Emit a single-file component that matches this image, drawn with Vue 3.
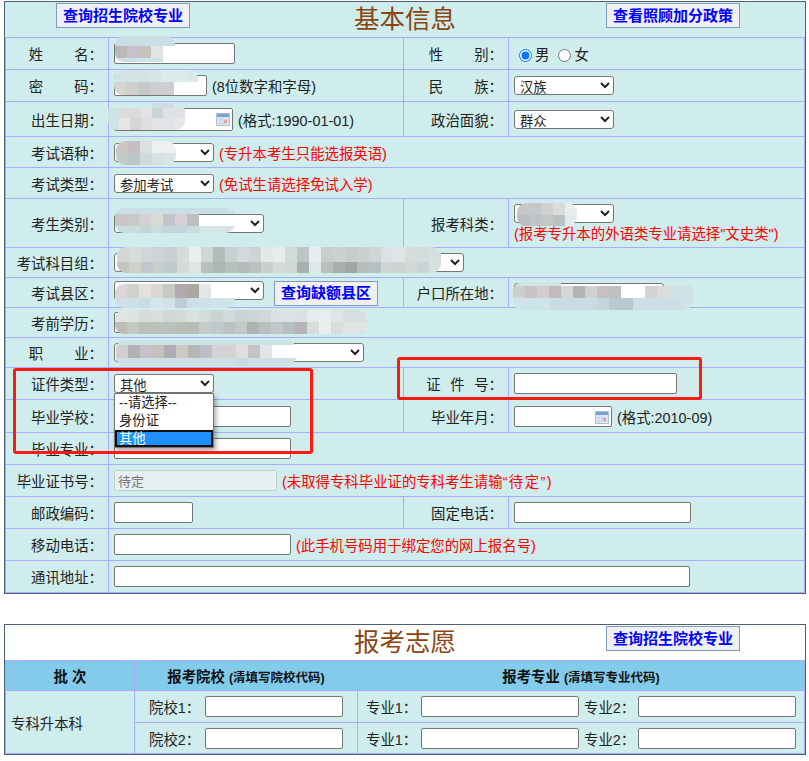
<script setup>
const patches = [
  { x: 115, y: 36, cell: 12, rh: [10, 12, 4], rows: ['c9dfe5 c9dfe5 c9dfe5 cadfe5 c9dfe5', 'bcb8b4 c8c0cc c6c2be e2e3e3 -', 'cbe0e6 cbe0e6 cfe4e8 cfe4e8 -'] },
  { x: 114, y: 70, cell: 12, rh: [12, 13], rows: ['cfe4e6 d4e2e3 d4e2e3 d6e5e6 dcebec dcebec d9e9ea', 'd7d5d3 d2cecb c4c9c8 cccfcf cdd0d0 - -'] },
  { x: 108, y: 103, cell: 11, rh: [5, 10, 12], rows: ['- - - - cbdde2 cbdde2 -', 'cde3e6 d9dcdc dddcdc e2e3e4 c9d3d8 dfe2e4 dfe2e4', 'cde3e6 e5e5e5 d7d5d3 dfdfe0 e3e4e8 e3e3e6 e6e7ea'] },
  { x: 116, y: 141, cell: 12, rh: [12, 12], rows: ['cbc5c3 c5bfc1 dde0e0 eeefef eff0f0', 'c0cbca b9c7c6 cddad9 d4e2e1 d7e5e4'] },
  { x: 115, y: 208, cell: 12, rh: [6, 12, 7], rows: ['c8e0e3 c8e0e3 c8e0e3 c8e0e3 c8e0e3 c8e0e3 c8e0e3 c8e0e3 c8e0e3 c8e0e3', 'ccc5c5 c8c9c9 d6cfd3 d8dbd5 c5c3ca d6d0d4 bcc0c2 - - -', 'c9dcdf c9dcdf c4d6dc c9dcdf c4d6dc c4d6dc c9dcdf d5e5e7 d5e5e7 d5e5e7'] },
  { x: 517, y: 203, cell: 12, rh: [12, 11], rows: ['c7c7c8 c5c7ca d0d0cf d9dcdc e8eeee', 'b6c0c4 bcc4c6 c4c8c4 bac3c4 e2eaea'] },
  { x: 117, y: 247, cell: 12, rh: [15, 11], rows: [
    'd2d8d7 d8dcda d1d6d6 cfd3d5 c8d0d1 d7dcd9 e8eded d0d6d4 b4bcbb c8d0d0 d4d9dc ced4d5 e4e8e7 e6ebeb d3dbd9 bec4c6 e7ecec c8cece ccd1d0 c6cbcd ced0cd d0d6d6 dde1e3 dfe4e4 d6dcdc d4dbdb d6dede',
    'c3c5c0 ccd1cc c6c4cc c8cecc c0cbcb d6dad4 e0e5e2 b8c0be aeb5b3 b8bfbf b2bbb7 bcc0c0 c8cfcc d6dbda d0d7d4 a8afaf dfe7e8 b8bfbc a8aeac a0a7a3 b6bdbb b7c0c4 ced5d4 cdd3d3 d2d8d8 ccd3d5 d8e0e0'] },
  { x: 115, y: 284, cell: 12, rh: [14, 10], rows: ['dcd6d8 d0d2cc e5e0de d9d7d4 c8c8c4 b3a8ae a9a9a0 e3e6e6 - -', 'cfe0e6 cde0e8 c9dbe3 d5e5ec d0e2e8 bccdd8 cddee5 cee1e8 d0e2e8 d0e3e8'] },
  { x: 513, y: 282, cell: 12, rh: [4, 12, 12], rows: [
    'cfe4e6 cfe4e6 cfe4e6 cfe4e6 - - - - - - - - - - -',
    'ccd0cb cbc0c5 d2cdd0 c5b9bd d6d6d4 b5b5b5 cfd2cc c7bfc1 bcc2c0 - - d6d3d3 dcdcdc cfe2e8 cfe2e8',
    'cfe4e8 cfe4e8 cfe4e8 cadce3 cadce3 c9dbe3 c9dbe3 c4d6dc b7c8ce b7c8ce cbdde5 cbdde5 cbdde5 cbdde5 cfe2e8'] },
  { x: 115, y: 310, cell: 12, rh: [12, 12], rows: [
    'dfe5e3 dde4e2 d6dcd9 d9dfdd cfd6d5 d2dbda d8e0e0 d3dbdb cbd3d3 d3dada cbd2d3 cdd4d5 d2d8d9 dbe1e2 dce2e3 d9e1e3 e6ecec e8eeee dfe5e6 d6dee0 d6dee0',
    'bdbdb8 c4c8c3 bfbebb bcc0bd b9c0bd bbbdb7 b8bdb9 c4cbc8 c0c8c9 bcc1c1 c3c9c8 adb4b2 b8bfbe c1c6c6 b8bfc1 b8b2b8 d8dddc eaefee d9dcdc e0e5e4 e0e5e4'] },
  { x: 116, y: 340, cell: 12, rh: [5, 13, 8], rows: [
    'cde2e6 cde2e6 cde2e6 cde2e6 cde2e6 cde2e6 cde2e6 cde2e6 cde2e6 cde2e6 cde2e6 cde2e6 cde2e6 cde2e6 cde2e6',
    'd2d0ce b5b0b3 c5c3c8 c8c0bd b0acb3 cfc9c6 b5b7b0 bcbec6 d5d1d6 d6d2cf dfdde0 c6c4c2 e3e4e8 - -',
    'cde0e6 cde0e6 cde0e6 cde0e6 cde0e6 cde0e6 cde0e6 cde0e6 cde0e6 cde0e6 c8dae0 cde0e6 cde0e6 cde0e6 cde0e6'] }
]

const patchStyle = (p) => ({
  left: p.x + 'px',
  top: p.y + 'px',
  gridTemplateColumns: `repeat(${p.rows[0].split(' ').length}, ${p.cell}px)`,
  gridTemplateRows: p.rh.map((h) => h + 'px').join(' ')
})

const cells = (p) => p.rows.flatMap((r) => r.split(' ')).map((c) => (c === '-' ? 'transparent' : '#' + c))
</script>

<template>
  <div class="page">
    <table class="form">
      <colgroup>
        <col class="c1" /><col class="c2" /><col class="c3" /><col class="c4" />
      </colgroup>
      <tbody>
        <tr>
          <td colspan="4" class="head">
            <div class="head-row">
              <button class="link btn-left">查询招生院校专业</button>
              <h2 class="title">基本信息</h2>
              <button class="link btn-right">查看照顾加分政策</button>
            </div>
          </td>
        </tr>
        <tr class="h32">
          <td class="lb"><span class="sp32">姓</span>名：</td>
          <td class="f"><input class="w121" /></td>
          <td class="lb"><span class="sp32">性</span>别：</td>
          <td class="f">
            <label class="radio"><input type="radio" name="sex" checked />男</label>
            <label class="radio"><input type="radio" name="sex" />女</label>
          </td>
        </tr>
        <tr class="h32">
          <td class="lb"><span class="sp32">密</span>码：</td>
          <td class="f"><input class="w93" /> <span class="note">(8位数字和字母)</span></td>
          <td class="lb"><span class="sp32">民</span>族：</td>
          <td class="f"><select class="s100"><option>汉族</option></select></td>
        </tr>
        <tr class="h35">
          <td class="lb">出生日期：</td>
          <td class="f">
            <span class="date">
              <input class="w119 tall" />
              <svg class="cal" viewBox="0 0 14 13"><rect x="0.5" y="0.5" width="13" height="12" fill="#e8eef8" stroke="#aebfd8" /><rect x="1" y="1" width="12" height="3" fill="#7f9fd0" /><path d="M1 7h12M1 10h12M4 4v8M7 4v8M10 4v8" stroke="#c3cfe2" stroke-width="1" /><rect x="8" y="7" width="3" height="3" fill="#e8a09a" /></svg>
            </span>
            <span class="note">(格式:1990-01-01)</span>
          </td>
          <td class="lb">政治面貌：</td>
          <td class="f"><select class="s100"><option>群众</option></select></td>
        </tr>
        <tr class="h31">
          <td class="lb">考试语种：</td>
          <td class="f" colspan="3"><select class="s100"><option></option></select> <span class="warn">(专升本考生只能选报英语)</span></td>
        </tr>
        <tr class="h31">
          <td class="lb">考试类型：</td>
          <td class="f" colspan="3"><select class="s100"><option>参加考试</option></select> <span class="warn">(免试生请选择免试入学)</span></td>
        </tr>
        <tr class="h49">
          <td class="lb">考生类别：</td>
          <td class="f"><select class="s150"><option></option></select></td>
          <td class="lb">报考科类：</td>
          <td class="f">
            <select class="s100"><option></option></select>
            <div class="warn under">(报考专升本的外语类专业请选择"文史类")</div>
          </td>
        </tr>
        <tr class="h30">
          <td class="lb">考试科目组：</td>
          <td class="f" colspan="3"><select class="s350"><option></option></select></td>
        </tr>
        <tr class="h30">
          <td class="lb">考试县区：</td>
          <td class="f">
            <div class="county">
              <select class="s150"><option></option></select>
              <button class="link btn-county">查询缺额县区</button>
            </div>
          </td>
          <td class="lb">户口所在地：</td>
          <td class="f"><select class="s150"><option></option></select></td>
        </tr>
        <tr class="h30">
          <td class="lb">考前学历：</td>
          <td class="f" colspan="3"><input class="w250" /></td>
        </tr>
        <tr class="h30">
          <td class="lb"><span class="sp32">职</span>业：</td>
          <td class="f" colspan="3"><select class="s250"><option></option></select></td>
        </tr>
        <tr class="h32">
          <td class="lb">证件类型：</td>
          <td class="f">
            <span class="sel-wrap">
              <select class="s100"><option>其他</option></select>
              <div class="dropdown">
                <div class="opt">--请选择--</div>
                <div class="opt">身份证</div>
                <div class="opt on">其他</div>
              </div>
            </span>
          </td>
          <td class="lb"><span class="sp10">证件</span>号：</td>
          <td class="f"><input class="w163" /></td>
        </tr>
        <tr class="h33">
          <td class="lb">毕业学校：</td>
          <td class="f"><input class="w177" /></td>
          <td class="lb">毕业年月：</td>
          <td class="f">
            <span class="date">
              <input class="w98" />
              <svg class="cal" viewBox="0 0 14 13"><rect x="0.5" y="0.5" width="13" height="12" fill="#e8eef8" stroke="#aebfd8" /><rect x="1" y="1" width="12" height="3" fill="#7f9fd0" /><path d="M1 7h12M1 10h12M4 4v8M7 4v8M10 4v8" stroke="#c3cfe2" stroke-width="1" /><rect x="8" y="7" width="3" height="3" fill="#e8a09a" /></svg>
            </span>
            <span class="note">(格式:2010-09)</span>
          </td>
        </tr>
        <tr class="h32">
          <td class="lb">毕业专业：</td>
          <td class="f" colspan="3"><input class="w177" /></td>
        </tr>
        <tr class="h32">
          <td class="lb">毕业证书号：</td>
          <td class="f" colspan="3"><input class="w163 off" value="待定" disabled /> <span class="warn">(未取得专科毕业证的专科考生请输<span class="quoted">“待定”</span>)</span></td>
        </tr>
        <tr class="h32">
          <td class="lb">邮政编码：</td>
          <td class="f"><input class="w79" /></td>
          <td class="lb">固定电话：</td>
          <td class="f"><input class="w177" /></td>
        </tr>
        <tr class="h32">
          <td class="lb">移动电话：</td>
          <td class="f" colspan="3"><input class="w177" /> <span class="warn">(此手机号码用于绑定您的网上报名号)</span></td>
        </tr>
        <tr class="h33">
          <td class="lb">通讯地址：</td>
          <td class="f" colspan="3"><input class="w576" /></td>
        </tr>
      </tbody>
    </table>

    <table class="form wish">
      <colgroup>
        <col class="w1" /><col class="w2" /><col class="w3" />
      </colgroup>
      <tbody>
        <tr>
          <td colspan="3" class="head white">
            <div class="head-row">
              <span></span>
              <h2 class="title">报考志愿</h2>
              <button class="link btn-right">查询招生院校专业</button>
            </div>
          </td>
        </tr>
        <tr class="h30 th">
          <td class="ctr"><b>批 次</b></td>
          <td class="ctr"><b>报考院校</b> <b class="small">(清填写院校代码)</b></td>
          <td class="ctr"><b>报考专业</b> <b class="small">(清填写专业代码)</b></td>
        </tr>
        <tr class="h32">
          <td rowspan="2" class="batch">专科升本科</td>
          <td class="pair school"><span class="tag">院校1：</span><input class="w138" /></td>
          <td class="pair major">
            <span class="tag">专业1：</span><input class="w158" />
            <span class="tag two">专业2：</span><input class="w158" />
          </td>
        </tr>
        <tr class="h32">
          <td class="pair school"><span class="tag">院校2：</span><input class="w138" /></td>
          <td class="pair major">
            <span class="tag">专业1：</span><input class="w158" />
            <span class="tag two">专业2：</span><input class="w158" />
          </td>
        </tr>
      </tbody>
    </table>

    <div v-for="(p, i) in patches" :key="i" class="mosaic" :style="patchStyle(p)">
      <i v-for="(c, j) in cells(p)" :key="j" :style="{ background: c }"></i>
    </div>

    <div class="mark mark-left"></div>
    <div class="mark mark-right"></div>
  </div>
</template>

<style>
html, body { background: #fff; }
</style>

<style scoped>
.page {
  position: relative;
  width: 809px;
  height: 761px;
  padding: 1px 0 0 4px;
  box-sizing: border-box;
  overflow: hidden;
  font-family: "Liberation Sans", "Noto Sans CJK SC", sans-serif;
  font-size: 14.4px;
  color: #222;
}
.form {
  width: 802px;
  table-layout: fixed;
  border-collapse: separate;
  border-spacing: 0;
  border: 1px solid #4d5f75;
  background: #cfeded;
}
.wish { margin-top: 30px; }
.c1 { width: 103px; }
.c2 { width: 295px; }
.c3 { width: 105px; }
.c4 { width: 297px; }
.w1 { width: 129px; }
.w2 { width: 223px; }
.w3 { width: 448px; }

td {
  box-sizing: border-box;
  padding: 0;
  border-top: 1px solid #aaaaff;
  border-left: 1px solid #aaaaff;
  white-space: nowrap;
}
td:last-child { border-right: 1px solid #aaaaff; }
tr:last-child td { border-bottom: 1px solid #aaaaff; }
.batch { border-bottom: 1px solid #aaaaff; }

.head { border: 0 !important; height: 35px; vertical-align: top; }
.white { background: #fff; }
.head-row {
  display: grid;
  grid-template-columns: 1fr auto 1fr;
  align-items: start;
  height: 35px;
}
.title {
  margin: 0;
  font-size: 25.5px;
  line-height: 34px;
  font-weight: 400;
  color: #8b4513;
}
.link {
  box-sizing: border-box;
  width: 134px;
  height: 25px;
  padding: 0;
  border: 1px solid #7c9dbf;
  background: #f0f0f3;
  color: #0000ff;
  font: bold 15px "Liberation Sans", "Noto Sans CJK SC", sans-serif;
  line-height: 22px;
}
.btn-left { justify-self: start; margin: 1px 0 0 51px; }
.btn-right { justify-self: end; margin: 1px 65px 0 0; }
.btn-county { width: 104px; margin: 0 0 0 10px; }

.h30 td { height: 30px; }
.h31 td { height: 31px; }
.h32 td { height: 32px; }
.h33 td { height: 33px; }
.h35 td { height: 35px; }
.h49 td { height: 49px; }

.lb { text-align: right; padding-right: 5px; }
.f { padding-left: 5px; }
.sp32 { letter-spacing: 31px; }
.sp10 { letter-spacing: 9.6px; }

input:not([type="radio"]) {
  box-sizing: border-box;
  height: 21px;
  margin: 0;
  padding: 1px 3px;
  vertical-align: middle;
  font: 13px "Liberation Sans", "Noto Sans CJK SC", sans-serif;
  background: #fff;
  border: 1px solid #767676;
  border-radius: 2px;
  outline: none;
}
select {
  box-sizing: border-box;
  height: 19px;
  margin: 0;
  padding: 2px 0 0 1px;
  vertical-align: middle;
  font: 13.33px "Liberation Sans", "Noto Sans CJK SC", sans-serif;
  color: #222;
  background: #fff;
  border: 1px solid #767676;
  border-radius: 3px;
}
.s100 { width: 100px; }
.s150 { width: 150px; }
.s250 { width: 250px; }
.s350 { width: 350px; }
.w79 { width: 79px; }
.w93 { width: 93px; }
.w98 { width: 98px; }
.w119 { width: 119px; }
.w121 { width: 121px; }
.w138 { width: 138px; }
.w158 { width: 158px; }
.w163 { width: 163px; }
.w177 { width: 177px; }
.w250 { width: 250px; }
.w576 { width: 576px; }
.tall { height: 23px !important; }
input.off {
  background: #e8f1f1;
  border-color: #bfcfcf;
  color: #777;
}

.note { margin-left: 1px; vertical-align: middle; }
.date + .note { margin-left: 5px; }
.warn { margin-left: 1px; color: #ff0000; vertical-align: middle; }
.under { margin: 3px 0 0; line-height: 16px; }
.quoted { letter-spacing: 1.4px; }

.radio { margin-right: 4px; vertical-align: middle; }
.radio input { vertical-align: -2px; margin-right: 3px; }

.date { position: relative; display: inline-block; vertical-align: middle; line-height: 0; }
.cal { position: absolute; top: 5px; right: 3px; width: 14px; height: 13px; }

.county { display: flex; align-items: flex-start; margin-top: 1px; }

.sel-wrap { position: relative; display: inline-block; vertical-align: middle; line-height: 0; }
.dropdown {
  position: absolute;
  z-index: 4;
  left: 0;
  top: 19px;
  box-sizing: border-box;
  width: 100px;
  height: 55px;
  background: #fff;
  border: 1px solid #767676;
  box-shadow: 2px 3px 5px rgba(0, 0, 0, 0.35);
}
.opt {
  height: 18px;
  padding-left: 4px;
  font-size: 13.33px;
  line-height: 17px;
  color: #222;
}
.opt.on {
  box-sizing: border-box;
  height: 17px;
  padding-left: 2px;
  background: #1e90ff;
  border: 2px solid #111;
  line-height: 13px;
  color: #fff;
}

.th td { background: #83cbea; color: #111; }
.ctr { text-align: center; }
.small { font-size: 12.5px; }
.batch { padding-left: 5px; }
.pair { padding-left: 14px; }
.major { padding-left: 8px; }
.tag { display: inline-block; width: 55px; vertical-align: middle; }
.school .tag { width: 56px; }
.two { width: 54px; margin-left: 5px; }

.mosaic {
  position: absolute;
  z-index: 3;
  display: grid;
  overflow: hidden;
  border-radius: 9px;
  filter: blur(0.5px);
}
.mosaic i { display: block; }

.mark {
  position: absolute;
  z-index: 5;
  box-sizing: border-box;
  border: 3px solid #ff1a10;
  border-radius: 3px;
  pointer-events: none;
}
.mark-left { left: 13px; top: 368px; width: 300px; height: 86px; }
.mark-right { left: 397px; top: 357px; width: 305px; height: 43px; }
</style>
